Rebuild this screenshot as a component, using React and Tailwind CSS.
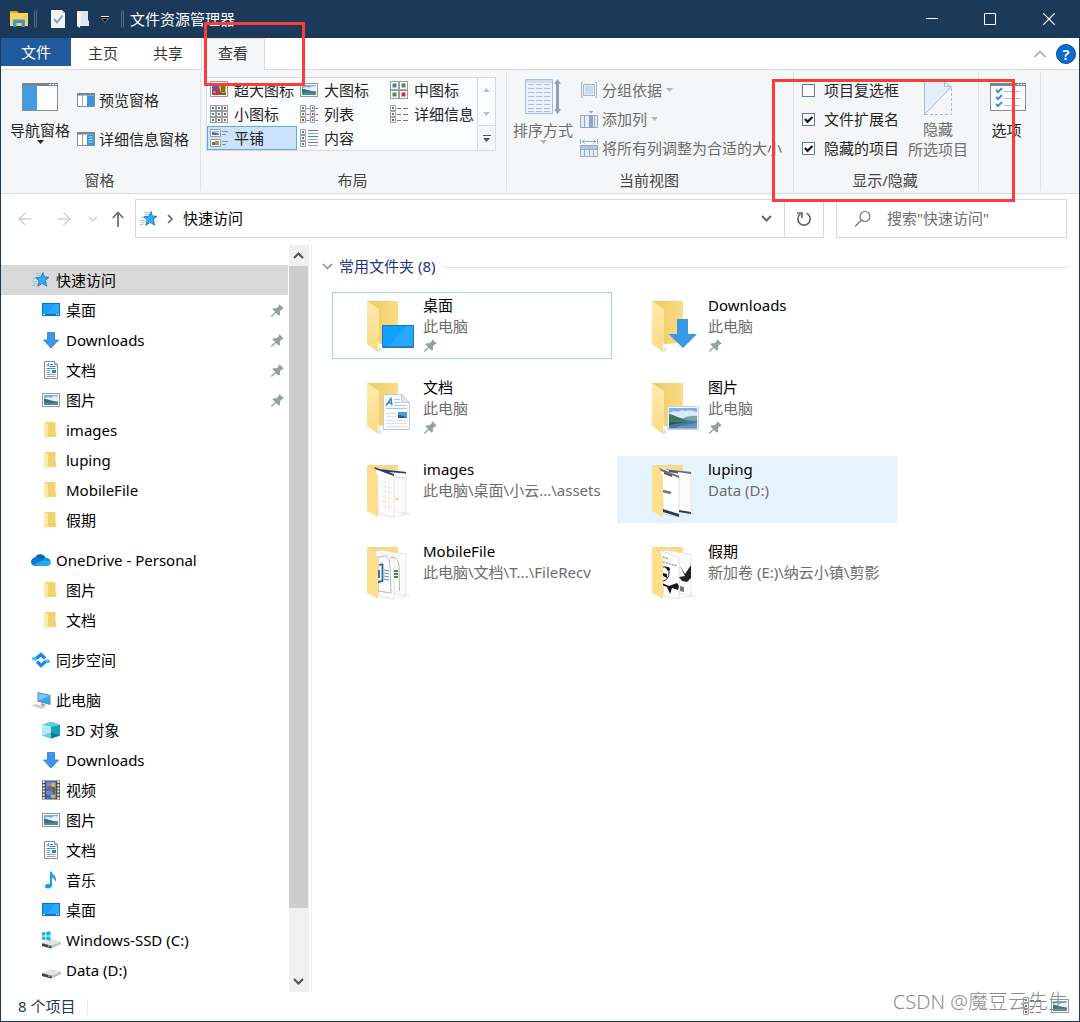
import { useState } from "react";
import { ArrowLeft, ArrowRight } from "lucide-react";

/* ---------- small icons ---------- */

const StarIcon = () => (
  <svg className="w-[18px] h-[18px] shrink-0" viewBox="0 0 18 18">
    <path d="M11 1.500l1.300 4.500 4.700.3-3.700 3.200 1.300 5.700-4.300-2.900-4.500 3 1.400-5.300-3.400-3.300 5-.4z" fill="#35aaf0" stroke="#1679c4" strokeWidth="0.9" strokeLinejoin="round" />
    <path d="M4 2.500h5M5 4.500h4M1 7.500h3M0 10.500h5M1 12.500h4M0 14.500h3" stroke="#7cc3f1" strokeWidth="0.8" />
  </svg>
);

const DesktopIcon = () => (
  <svg className="w-[18px] h-[18px] shrink-0" viewBox="0 0 18 18">
    <rect x="0.5" y="2.500" width="17" height="12" fill="#18a0fb" stroke="#0a74c4" />
    <path d="M13 3l-8 10h12V3z" fill="#3fb4ff" opacity="0.5" />
    <path d="M1 13.500h16" stroke="#0a6fbd" />
    <path d="M1 13.500h2M14 13.500h1M16 13.500h1" stroke="#e6f5ff" />
  </svg>
);

const DownloadIcon = () => (
  <svg className="w-[18px] h-[18px] shrink-0" viewBox="0 0 18 18">
    <path d="M5.500 1.500h7v7.500h4l-7.500 8-7.500-8h4z" fill="#3b97e8" stroke="#2a7fd0" strokeWidth="0.8" />
  </svg>
);

const DocIcon = () => (
  <svg className="w-[18px] h-[18px] shrink-0" viewBox="0 0 18 18">
    <path d="M2.500.5h10l3 3v14h-13z" fill="#fff" stroke="#8a8f94" />
    <path d="M12.500.5v3h3" fill="#e4e7e9" stroke="#8a8f94" />
    <path d="M4.500 5.500l2-3 .5 3M8 3.500h3M8 5.500h5.500M4.500 7.500h9" fill="none" stroke="#2e90d6" />
    <path d="M4.500 9.500h4M4.500 11.500h4M4.500 13.500h9M4.500 15.500h9" stroke="#9da3a8" />
    <path d="M10 9h4v3h-4z" fill="#347fb8" />
  </svg>
);

const PictureIcon = () => (
  <svg className="w-[18px] h-[18px] shrink-0" viewBox="0 0 18 18">
    <rect x="0.5" y="2.500" width="17" height="13" fill="#fff" stroke="#94989c" />
    <path d="M2 4h14v10H2z" fill="#74aef2" />
    <path d="M3 7q4-2 6 0 3-3 7-1.500V11H3z" fill="#e4f2fc" />
    <path d="M2 8c4-.3 6 2 14 2.500V12H2z" fill="#3f7161" />
    <path d="M2 11.500h14V14H2z" fill="#4a86ad" />
  </svg>
);

const FolderIcon = () => (
  <svg className="w-[18px] h-[18px] shrink-0" viewBox="0 0 18 18">
    <path d="M2.500 1h11v10l.8 1v4H4z" fill="#f7d675" />
    <path d="M5 1.500h8V15H6z" fill="#efcb64" opacity="0.5" />
    <path d="M2 1.300l4 2V13l-.8 4.800L2 15.500z" fill="#ffe9a8" />
  </svg>
);

const CloudIcon = () => (
  <svg className="w-5 h-[18px] shrink-0" viewBox="0 0 20 18">
    <path d="M4 7c1-3 4-4.500 7-3.500 2.300.7 3 2 3.500 3.500l-2 4-7-1z" fill="#0364b8" />
    <path d="M4.800 6.300c2-.5 3.200.3 8.200 3.400L4 15C1.500 15 0 13 0 10.800s2-4.400 4.800-4.500z" fill="#0f78d4" />
    <path d="M13 7c3-1 6 .5 6.600 3.200L17 12l-6-2z" fill="#1490df" />
    <path d="M2 14.200l9-4.700 8.500 1c1 2-.4 4.500-3 4.500H4.500c-1 0-1.800-.3-2.500-.8z" fill="#28a8ea" />
  </svg>
);

const SyncIcon = () => (
  <svg className="w-[18px] h-[18px] shrink-0" viewBox="0 0 18 18" fill="none" strokeWidth="3.200">
    <path d="M1 7.500c2.500 1 3.500 0 4.500-1L9 3.500l4 4" stroke="#1d83f5" />
    <path d="M17 10.500c-2.500-1-3.500 0-4.500 1l-3.500 3-4-4" stroke="#1d83f5" />
    <path d="M0 7c1.500 1 3 1 4.500.3M18 11c-1.500-1-3-1-4.500-.3" stroke="#35d6f5" strokeWidth="2.500" />
  </svg>
);

const ComputerIcon = () => (
  <svg className="w-5 h-[18px] shrink-0" viewBox="0 0 20 18">
    <path d="M6.500 1l13 3v10l-13-3.500z" fill="#6b7f8e" />
    <path d="M7.500 2.300l11.300 2.500v7.900l-11.300-3z" fill="#2fa9f0" />
    <path d="M7.500 2.300l11.300 2.500-11.300 4.700z" fill="#74c9f8" />
    <path d="M10 12l4 1v2.500l-4-1z" fill="#a5abb0" />
    <path d="M0 14.500l5-1.500 10 3-4 2z" fill="#c9ced2" />
  </svg>
);

const CubeIcon = () => (
  <svg className="w-[18px] h-[18px] shrink-0" viewBox="0 0 18 18">
    <path d="M9 .5l9 3-9 2.500-9-2.500z" fill="#5fced9" />
    <path d="M0 3.500L9 6v11.500l-9-3z" fill="#b3ecf0" />
    <path d="M18 3.500L9 6v11.500l9-3z" fill="#159fc0" />
    <path d="M9 11.500l9 3-9 3z" fill="#0b7890" />
    <path d="M9 11.500l-9 3 9 3z" fill="#62d0da" />
  </svg>
);

const VideoIcon = () => (
  <svg className="w-[18px] h-5 shrink-0" viewBox="0 0 18 20">
    <path d="M0 .5h18v19H0z" fill="#4a4a4a" />
    <path d="M1.700 1v18M16.300 1v18" stroke="#eee" strokeWidth="2" strokeDasharray="2 1.200" />
    <path d="M4 1.500h10v8H4zM4 10.500h10v8H4z" fill="#5a8ee0" />
    <path d="M9 3h4v5H9z" fill="#d8b32b" />
    <path d="M5 6h5v3H5z" fill="#b64a72" />
    <path d="M10 7h3v2h-3z" fill="#3b7c36" />
    <path d="M4 14l5 2 1 2.500H4z" fill="#3469c4" />
    <path d="M9 15h4v3H9z" fill="#d8b32b" />
    <path d="M10 11h3v3h-2z" fill="#c2382e" />
  </svg>
);

const MusicIcon = () => (
  <svg className="w-[18px] h-[18px] shrink-0" viewBox="0 0 18 18">
    <path d="M8 .5h1.500c.5 3 4.500 4 4.500 7.500 0 1-.3 2-1 3 0-3-1.500-4-3-4.500V14c0 2-1.500 3.500-4 3.500C4 17.500 3 16.700 3 15.500c0-2 2.500-3.300 5-2.500z" fill="#1c9bf0" />
  </svg>
);

const DriveIcon = ({ win }) => (
  <svg className="w-[19px] h-[18px] shrink-0" viewBox="0 0 19 18">
    <path d="M0 12.500L9 8.500l10 2.300v2.500L9 17.500l-9-2.500z" fill="#bfc3c6" />
    <path d="M0 12.300l9-3.800 10 2.300-9.500 4z" fill="#e1e3e5" />
    <path d="M0 12.300l9.500 2.500v2.700L0 15z" fill="#3d4144" />
    <path d="M6 15h2" stroke="#4ddd56" strokeWidth="1.500" />
    {win && <path d="M0 1.500l3.300-.5v3.500H0zM4.200.9L8.500.3v4.200H4.200zM0 5.400h3.300v3.500L0 8.400zM4.200 5.400h4.300v4.200l-4.300-.6z" fill="#11b3f2" />}
  </svg>
);

const PinIcon = () => (
  <svg className="w-[13px] h-[13px] shrink-0" viewBox="0 0 13 13">
    <path d="M8.500.3l4.200 4.200-1.200.8-.6-.1-2 2.300.2 3-1.200 1.200L4.800 8.900 1 12.700l-1-.2.2-1L4.100 8 1.300 5.200l1.200-1 3 .1L7.800 2.200l-.1-.7z" fill="#93a0a8" />
  </svg>
);

const Caret = ({ className }) => (
  <svg className={`w-[7px] h-1 shrink-0 ${className || ""}`} viewBox="0 0 7 4"><path d="M0 0h7L3.500 4z" fill="currentColor" /></svg>
);

const arrows = { down: "M1 1l4.500 4.500L10 1", up: "M1 6l4.500-4.500L10 6" };

const Arrow = ({ dir, width = 1.5 }) => (
  <svg className="w-[11px] h-[7px] shrink-0" viewBox="0 0 11 7"><path d={arrows[dir]} fill="none" stroke="currentColor" strokeWidth={width} /></svg>
);

/* ---------- ribbon icons ---------- */

const NavPaneIcon = () => (
  <svg className="w-9 h-7" viewBox="0 0 36 28">
    <path d="M.5.5h35v27H.5z" fill="#fdfdfd" stroke="#888d92" />
    <path d="M0 0h36v3H0z" fill="#7f8488" />
    <path d="M27 1.500h2M30 1.500h2M33 1.500h2" stroke="#fff" />
    <path d="M1 3h14v24H1z" fill="#429ce3" />
  </svg>
);

const SmallPaneIcon = ({ detail }) => (
  <svg className="w-[18px] h-3.5 shrink-0" viewBox="0 0 18 14">
    <path d="M.5.5h17v13H.5z" fill="#fdfdfd" stroke="#888d92" />
    <path d="M0 0h18v2.500H0z" fill="#7f8488" />
    <path d="M5.500 2v11" stroke="#a7abae" />
    <path d="M10 2.500h7V13h-7z" fill="#3796e3" />
    {detail && <path d="M11.500 5h4M11.500 7.500h4M11.500 10h4" stroke="#c5e2fa" />}
  </svg>
);

const ThumbIcon = ({ grid }) => {
  const step = 18 / grid;
  const size = grid === 2 ? 4 : 2;
  const pad = (step - size) / 2;
  const colors = ["#3c83b5", "#5a8a4a", "#c23b2e"];
  const cells = Array.from({ length: grid * grid }, (_, i) => ({ c: i % grid, r: Math.floor(i / grid) }));
  return (
    <svg className="w-[18px] h-[18px] shrink-0" viewBox="0 0 18 18">
      {cells.map(({ c, r }) => (
        <g key={`${c}-${r}`}>
          <rect x={c * step + 0.5} y={r * step + 0.5} width={step - 1} height={step - 1} fill="#fff" stroke="#9a9ea2" />
          <rect x={c * step + pad} y={r * step + pad} width={size} height={size} fill={colors[(c + (r === grid - 1 ? 1 : 0)) % 3]} />
        </g>
      ))}
    </svg>
  );
};

const HugeIcon = () => (
  <svg className="w-[18px] h-[18px] shrink-0" viewBox="0 0 18 18">
    <path d="M.5.5h17v15H.5z" fill="#fff" stroke="#94989c" />
    <path d="M2 2h14v12H2z" fill="#3e64c8" />
    <path d="M2 9l4-2 5 4v3H2z" fill="#cf2f3d" />
    <path d="M9 5l4-2 3 3v5l-3 2-3-3z" fill="#e8b81e" />
    <path d="M12 5v6M14 5v6" stroke="#2a2110" />
    <path d="M3 10h3v2H3z" fill="#4aa3e0" />
    <path d="M11 12h5v2h-5z" fill="#2f7d38" />
  </svg>
);

const ListIcon = ({ kind }) => (
  <svg className="w-[18px] h-[18px] shrink-0" viewBox="0 0 18 18" fill="none">
    {kind === "tiles" ? (
      <>
        <path d="M.5.5h10v7H.5zM.5 10.500h10v7H.5z" fill="#fff" stroke="#9a9ea2" />
        <path d="M2 3q4 0 7 2v1H2zM2 13h3v3H2z" fill="#3b7791" />
        <path d="M2 2h7v2z" fill="#7fb9f2" />
        <path d="M5 12h4v4H5z" fill="#c4943a" />
        <path d="M12 2.500h6M12 5.500h4M12 12.500h6M12 15.500h4" stroke="#8a8e92" />
      </>
    ) : (
      <>
        <path d="M.5.5h5v5h-5zM.5 6.500h5v5h-5zM.5 12.500h5v5h-5z" fill="#fff" stroke="#9a9ea2" />
        <path d="M2 3h2" stroke="#3c83b5" strokeWidth="2" />
        <path d="M2 9h2" stroke="#5a8a4a" strokeWidth="2" />
        <path d="M2 15h2" stroke={kind === "content" ? "#3c83b5" : "#c23b2e"} strokeWidth="2" />
        {kind === "list" && (
          <>
            <path d="M10.500.5h4v5h-4zM10.500 6.500h4v5h-4zM10.500 12.500h4v5h-4z" fill="#fff" stroke="#9a9ea2" />
            <path d="M12 3h1.500M12 15h1.500" stroke="#3c83b5" strokeWidth="2" />
            <path d="M12 9h1.500" stroke="#c23b2e" strokeWidth="2" />
            <path d="M6.500 3.500h3M6.500 9.500h3M6.500 15.500h3M15.500 3.500H18M15.500 9.500H18M15.500 15.500H18" stroke="#777" />
          </>
        )}
        {kind === "detail" && <path d="M7 3.500h4M13 3.500h5M7 9.500h4M13 9.500h5M7 15.500h4M13 15.500h5" stroke="#777" />}
        {kind === "content" && (
          <>
            <path d="M8 1.500h10M8 7.500h10M8 13.500h10" stroke="#777" />
            <path d="M8 4.500h10M8 10.500h10M8 16.500h10" stroke="#7aaef0" />
          </>
        )}
      </>
    )}
  </svg>
);

const SortIcon = () => (
  <svg className="w-9 h-9" viewBox="0 0 36 36">
    <path d="M.5.5h27v34H.5z" fill="#e9f1fb" stroke="#a9bbd8" />
    <path d="M1 1h26v3H1z" fill="#cfdcf0" />
    <path d="M3 5.500h22M3 9.500h22M3 13.500h22M3 17.500h22M3 21.500h22M3 25.500h22M3 29.500h22M3 32.500h22" stroke="#aebfd9" strokeDasharray="6 2" />
    <path d="M31 4h3v27h-3z" fill="#8ea1c2" />
    <path d="M32.500 0l3.500 5h-7zM32.500 35l3.500-5h-7z" fill="#8ea1c2" />
  </svg>
);

const GroupIcon = () => (
  <svg className="w-[18px] h-[18px] shrink-0" viewBox="0 0 18 18" fill="none">
    <path d="M3 1.500H1.500v15H3M15 1.500h1.500v15H15" stroke="#a3b4d0" />
    <path d="M3.500 3.500h11v11h-11z" fill="#e2ecf9" stroke="#a3b4d0" />
    <path d="M5 5h8v8H5z" fill="#c9d9ee" />
  </svg>
);

const AddColIcon = () => (
  <svg className="w-[18px] h-[18px] shrink-0" viewBox="0 0 18 18">
    <path d="M.5 5.500h17v12H.5z" fill="#e4eefb" stroke="#94a8ca" />
    <path d="M4.500 6v11M14.500 6v11" stroke="#94a8ca" />
    <path d="M9 5h4v13H9zM8.500 1h5L11 3.500z" fill="#8fa4c8" />
  </svg>
);

const FitIcon = () => (
  <svg className="w-[18px] h-[18px] shrink-0" viewBox="0 0 18 18" fill="none" stroke="#94a8ca">
    <path d="M.5 0v5M17.500 0v5M2 2.500h14M4.500.5l-2 2 2 2M13.500.5l2 2-2 2" />
    <path d="M.5 6.500h17v11H.5z" fill="#e4eefb" />
    <path d="M1 7h16v3H1z" fill="#b6c5de" stroke="none" />
    <path d="M0 10.500h18M4.500 11v6M9.500 11v6M13.500 11v6" />
  </svg>
);

const HideIcon = () => (
  <svg className="w-7 h-[34px]" viewBox="0 0 28 34" fill="none">
    <path d="M.5 33.500V.5h20l7 6z" fill="#e6f0fd" />
    <path d="M20.500 0v5.500h7L.5 33.500V0" stroke="#a8b9d6" />
    <path d="M27.500 7v26.500H1" stroke="#a8b9d6" strokeDasharray="3 2" />
    <path d="M20.500.5l7 6" stroke="#a8b9d6" />
  </svg>
);

const OptionsIcon = () => (
  <svg className="w-9 h-7" viewBox="0 0 36 28" fill="none">
    <path d="M.5.5h35v27H.5z" fill="#fdfdfd" stroke="#888d92" />
    <path d="M0 0h36v3H0z" fill="#7f8488" />
    <path d="M27 1.500h2M30 1.500h2M33 1.500h2" stroke="#fff" />
    <path d="M6 7l2 2 4-4M6 14l2 2 4-4M6 21l2 2 4-4" stroke="#3594dc" strokeWidth="2" />
    <path d="M14 8.500h16M14 15.500h16M14 22.500h16" stroke="#b9bcbf" />
  </svg>
);

/* ---------- tile icons ---------- */

const FolderOverlay = ({ kind }) => {
  if (kind === "desktop") return (
    <>
      <path d="M16.500 25.500h31v22h-31z" fill="#12a0ff" stroke="#1577c2" />
      <path d="M40 26h7v20H24z" fill="#39b1ff" opacity="0.5" />
      <path d="M16 46.500h32" stroke="#2a86b8" />
    </>
  );
  if (kind === "download") return <path d="M26 19h11v15h9L32 48 17.500 34H26z" fill="#3b97e8" />;
  if (kind === "doc") return (
    <>
      <path d="M17.500 12.500h18l8 8v27h-26z" fill="#fbfcfd" stroke="#c6cbcf" />
      <path d="M35.500 12.500v8h8z" fill="#e4e7e9" stroke="#c6cbcf" />
      <path d="M20 23.500l5-7 1 7M22 21h4" fill="none" stroke="#2e80b8" strokeWidth="1.300" />
      <path d="M28 17.500h6M28 20.500h6M28 23.500h13M20 26.500h21" stroke="#a5cdea" />
      <path d="M20 31.500h10M20 34.500h10M20 38.500h21M20 41.500h21M20 44.500h21" stroke="#dfe2e4" />
      <path d="M32 30h9v6h-9z" fill="#4a9bd8" />
      <path d="M32 33q5 0 9 3h-9z" fill="#2c5f6d" />
    </>
  );
  return (
    <>
      <path d="M16.500 24.500h31v23h-31z" fill="#f4f6f8" stroke="#cdd3d9" />
      <path d="M18 26h28v12H18z" fill="#7aaef7" />
      <path d="M18 31q5-3 9-1 3-3 7-1 5-2 12 1v10H18z" fill="#d9ebfa" />
      <path d="M30 37q8-4 16-3v5H30z" fill="#7da5a0" />
      <path d="M18 32c7 1 10 5 24 7.500l-24 1z" fill="#3f7558" />
      <path d="M18 39.500c10-1 19-1 28-.5v7.500H18z" fill="#3f7ba6" />
      <path d="M18 40h18l-18 3z" fill="#2b5560" />
      <path d="M28 44l18-3v5H24z" fill="#76a9c6" opacity="0.6" />
    </>
  );
};

const PageContent = ({ kind }) => {
  if (kind === "images") return (
    <>
      <path d="M8 3l20 7v2L9 5zM14 5l26 3v1.500L22 8z" fill="#2b3f5e" />
      <path d="M29 13l10 1.500" stroke="#c9dcf2" strokeWidth="1" />
      <path d="M15 17l11 2M15 22l11 2M15 27l11 2M15 32l11 2M15 37l11 2M15 42l11 2M19 14v33M23 15v33" stroke="#f0e9ea" />
      <path d="M29 35h4" stroke="#eedcae" strokeWidth="2" />
    </>
  );
  if (kind === "luping") return (
    <>
      <path d="M8 4l20 8v2L10 7zM13 5l27 3v2L20 7z" fill="#6b6e70" />
      <path d="M13 8l8 3v2l-8-3zM18 6l9 1.500v2L18 8z" fill="#55585b" />
      <path d="M12 27l8 2" stroke="#7a746e" strokeWidth="2.500" />
      <path d="M12 45l16 5v3l-16-5zM28 46l12 2v2l-12-2z" fill="#23415c" />
    </>
  );
  if (kind === "mobile") return (
    <>
      <path d="M12 11l7-1q5 2 5 9l1 28-13-2z" fill="#fcfcfc" stroke="#a9a89c" strokeWidth="0.800" />
      <path d="M24 12q7-3 9 7l.5 26" fill="none" stroke="#a9a89c" strokeWidth="0.800" />
      <path d="M13 19l4-1M16.500 18v17M12 36l5-1M13 24v8" stroke="#2b62ad" strokeWidth="1.800" />
      <path d="M18 24l5 1M18 27l5 1M18 30l5 1M18 33l5 1" stroke="#5b8ccb" />
      <path d="M28 25h4M28 28h4M28 31h4" stroke="#2f8d52" strokeWidth="2" />
    </>
  );
  return (
    <>
      <path d="M12 11l6 2M12 16l14 4" stroke="#9a9a9a" strokeWidth="1.500" strokeDasharray="2 1" />
      <path d="M12 21q5-1 6 4t-3 9l-3 1" fill="none" stroke="#222" strokeWidth="1" />
      <path d="M14 21q5-1 5 3l-2 1zM12 27l4 1v4l-4-2zM11 37l7 3 8-3 2 3-1 4-6-2-2 6-3-7-5-2z" fill="#161616" />
      <path d="M29 20l5 8 6-9v13l-4 4-5-1-3-4 6-1z" fill="#222" />
      <path d="M29 40l4 1v5l-4-1z" fill="#777" />
    </>
  );
};

const TileIcon = ({ kind, open }) => (
  <svg className="w-[50px] h-[54px] shrink-0" viewBox="0 0 50 54">
    <defs>
      <linearGradient id="folderBack" x1="0" x2="1" y1="0" y2="0">
        <stop offset="0" stopColor="#ecc863" /><stop offset="1" stopColor="#fbdd85" />
      </linearGradient>
      <linearGradient id="folderFlap" x1="0" x2="0" y1="0" y2="1">
        <stop offset="0" stopColor="#ffebae" /><stop offset="1" stopColor="#fbdb83" />
      </linearGradient>
    </defs>
    {open ? (
      <>
        <path d="M1 1h31v8L13 12z" fill="#f9d983" />
        <path d="M28 53l18-3-6-2z" fill="#d9d9d9" opacity="0.5" />
        <path d="M12 4l28 4v41l-27-3z" fill="#fbfbfb" stroke="#dcdcdc" strokeWidth="0.600" />
        <path d="M9 4l19 8v41l-15-3z" fill="#fff" stroke="#cfcfcf" strokeWidth="0.600" />
        <PageContent kind={kind} />
        <path d="M1 1l11 10v42L1 47z" fill="#ffdf8c" />
      </>
    ) : (
      <>
        <path d="M1 1h31v42l-19 1L1 1z" fill="url(#folderBack)" />
        <path d="M1 1l12 8v29l-1 5v9L1 44z" fill="url(#folderFlap)" />
        <path d="M12 52l4-1-3-6z" fill="#e2e2e2" />
        <FolderOverlay kind={kind} />
      </>
    )}
  </svg>
);

/* ---------- data ---------- */

const tree = [
  { label: "快速访问", icon: StarIcon, active: true, items: [
    { label: "桌面", icon: DesktopIcon, pinned: true },
    { label: "Downloads", icon: DownloadIcon, pinned: true },
    { label: "文档", icon: DocIcon, pinned: true },
    { label: "图片", icon: PictureIcon, pinned: true },
    { label: "images", icon: FolderIcon },
    { label: "luping", icon: FolderIcon },
    { label: "MobileFile", icon: FolderIcon },
    { label: "假期", icon: FolderIcon },
  ] },
  { label: "OneDrive - Personal", icon: CloudIcon, items: [
    { label: "图片", icon: FolderIcon },
    { label: "文档", icon: FolderIcon },
  ] },
  { label: "同步空间", icon: SyncIcon, items: [] },
  { label: "此电脑", icon: ComputerIcon, items: [
    { label: "3D 对象", icon: CubeIcon },
    { label: "Downloads", icon: DownloadIcon },
    { label: "视频", icon: VideoIcon },
    { label: "图片", icon: PictureIcon },
    { label: "文档", icon: DocIcon },
    { label: "音乐", icon: MusicIcon },
    { label: "桌面", icon: DesktopIcon },
    { label: "Windows-SSD (C:)", icon: () => <DriveIcon win /> },
    { label: "Data (D:)", icon: DriveIcon },
  ] },
];

const tiles = [
  { name: "桌面", path: "此电脑", kind: "desktop", pinned: true },
  { name: "Downloads", path: "此电脑", kind: "download", pinned: true },
  { name: "文档", path: "此电脑", kind: "doc", pinned: true },
  { name: "图片", path: "此电脑", kind: "picture", pinned: true },
  { name: "images", path: "此电脑\\桌面\\小云...\\assets", kind: "images", open: true },
  { name: "luping", path: "Data (D:)", kind: "luping", open: true },
  { name: "MobileFile", path: "此电脑\\文档\\T...\\FileRecv", kind: "mobile", open: true },
  { name: "假期", path: "新加卷 (E:)\\纳云小镇\\剪影", kind: "holiday", open: true },
];

const layouts = [
  { label: "超大图标", icon: <HugeIcon /> },
  { label: "大图标", icon: <PictureIcon /> },
  { label: "中图标", icon: <ThumbIcon grid={2} /> },
  { label: "小图标", icon: <ThumbIcon grid={3} /> },
  { label: "列表", icon: <ListIcon kind="list" /> },
  { label: "详细信息", icon: <ListIcon kind="detail" /> },
  { label: "平铺", icon: <ListIcon kind="tiles" /> },
  { label: "内容", icon: <ListIcon kind="content" /> },
];

/* ---------- sections ---------- */

function TitleBar() {
  return (
    <header className="flex items-center h-[38px] bg-[#1b3a5a] text-white">
      <div className="flex items-center pl-[9px]">
        <svg className="w-[18px] h-4" viewBox="0 0 18 16">
          <path d="M0 0h7l1.500 2H18v13H0z" fill="#fcd35c" />
          <path d="M0 0h7l1.500 2H0z" fill="#e6a20f" />
          <path d="M3 16V8.500h12V16h-3.500v-4h-5v4z" fill="#3c98dc" />
        </svg>
        <span className="ml-1.5 w-[3px] h-[18px] rounded-sm border border-[#566f88]" />
        <button aria-label="属性" className="ml-3.5">
          <svg className="w-3.5 h-[18px]" viewBox="0 0 14 18">
            <path d="M0 0h11l3 3v15H0z" fill="#f1f4f9" />
            <path d="M11 0v3h3z" fill="#b8c4d4" />
            <path d="M3 9l3 3.500 5.500-7" fill="none" stroke="#8c9fbd" strokeWidth="2" />
          </svg>
        </button>
        <button aria-label="新建文件夹" className="ml-3">
          <svg className="w-3 h-[18px]" viewBox="0 0 12 18">
            <path d="M1 1h10v9l1 1v5H1z" fill="#dfe6f0" />
            <path d="M0 1l3.500 2v11l-.7 4L0 16z" fill="#f5f8fc" />
          </svg>
        </button>
        <button aria-label="自定义快速访问工具栏" className="ml-3">
          <svg className="w-2 h-2" viewBox="0 0 8 8"><path d="M.5 3.500h7L4 7.500z" fill="#000" stroke="#c5cfd9" strokeWidth="0.500" /><path d="M0 1.500h8" stroke="#e5eaef" /><path d="M0 2.500h8" stroke="#000" /></svg>
        </button>
        <span className="ml-3 w-[3px] h-[18px] rounded-sm border border-[#566f88]" />
        <h1 className="ml-1.5 leading-5">文件资源管理器</h1>
      </div>
      <div className="flex ml-auto">
        <button aria-label="最小化" className="flex justify-center items-center w-[58px] h-[38px]">
          <svg className="w-3 h-3" viewBox="0 0 12 12"><path d="M0 5.500h12" stroke="#fff" /></svg>
        </button>
        <button aria-label="最大化" className="flex justify-center items-center w-[58px] h-[38px]">
          <svg className="w-3 h-3" viewBox="0 0 12 12"><path d="M.5.5h11v11H.5z" fill="none" stroke="#fff" /></svg>
        </button>
        <button aria-label="关闭" className="flex justify-center items-center w-[60px] h-[38px]">
          <svg className="w-3 h-3" viewBox="0 0 12 12"><path d="M.3.3l11.400 11.400M11.700.3L.3 11.700" stroke="#fff" strokeWidth="1.200" /></svg>
        </button>
      </div>
    </header>
  );
}

function TabRow() {
  return (
    <nav className="flex items-stretch h-8 border-b border-[#dadbdc]">
      <button className="w-[70px] h-7 bg-[#1e5a9c] text-white">文件</button>
      <button className="w-16">主页</button>
      <button className="w-[66px]">共享</button>
      <div className="relative">
        <button className="w-16 h-8 pb-0.5 border-x border-t border-[#dadbdc] bg-[#f5f6f7]">查看</button>
        <div className="absolute -top-4 left-[3px] z-10 w-[101px] h-16 border-3 border-[#fc3b3b] pointer-events-none" />
      </div>
      <div className="flex items-center gap-2.5 ml-auto pr-[3px]">
        <button aria-label="折叠功能区"><svg className="w-3 h-2" viewBox="0 0 12 8"><path d="M.5 7L6 1.500 11.500 7" fill="none" stroke="#a0a0a0" strokeWidth="1.500" /></svg></button>
        <button aria-label="帮助" className="w-5 h-5 rounded-full border border-[#0b4f95] bg-[#0a6ccc] text-white font-semibold leading-4">?</button>
      </div>
    </nav>
  );
}

function Group({ label, className, children }) {
  return (
    <section className={`flex flex-col shrink-0 border-r border-[#e0e1e3] ${className}`}>
      <div className="flex-1">{children}</div>
      <h2 className="h-[21px] pr-0.5 text-center text-[#444] leading-5">{label}</h2>
    </section>
  );
}

function Ribbon() {
  const [view, setView] = useState("平铺");
  const [show, setShow] = useState({ "项目复选框": false, "文件扩展名": true, "隐藏的项目": true });

  return (
    <div className="flex h-[124px] py-0.5 border-b border-[#dadbdc] bg-[#f5f6f7] text-[#262626]">
      <Group label="窗格" className="w-[200px]">
        <div className="flex pt-[11px] pl-2">
          <button className="flex flex-col items-center w-[62px]">
            <NavPaneIcon />
            <span className="mt-[9px] leading-5">导航窗格</span>
            <Caret />
          </button>
          <div className="flex flex-col pt-[7px] pl-1.5 gap-[19px]">
            <button className="flex items-center gap-1 h-5"><SmallPaneIcon />预览窗格</button>
            <button className="flex items-center gap-1 h-5"><SmallPaneIcon detail />详细信息窗格</button>
          </div>
        </div>
      </Group>

      <Group label="布局" className="w-[306px]">
        <div className="flex mt-[5px] ml-[5px] w-[290px] border border-[#dadbdc] bg-[#fbfcfe]">
          <div className="grid grid-cols-3 w-[270px]">
            {layouts.map((l) => (
              <button key={l.label} onClick={() => setView(l.label)}
                className={`flex items-center gap-1.5 h-6 px-0.5 border whitespace-nowrap ${view === l.label ? "border-[#66a7e8] bg-[#cce4fb]" : "border-transparent"}`}>
                {l.icon}{l.label}
              </button>
            ))}
          </div>
          <div className="flex flex-col flex-1 border-l border-[#dadbdc]">
            <button aria-label="向上" className="flex flex-1 justify-center items-center text-[#b8bfcb]"><Caret className="rotate-180" /></button>
            <button aria-label="向下" className="flex flex-1 justify-center items-center text-[#b8bfcb]"><Caret /></button>
            <button aria-label="更多" className="flex flex-col flex-1 gap-0.5 justify-center items-center border-t border-[#dadbdc] bg-[#f5f6f7] text-[#3f5573]">
              <span className="w-2 h-px bg-[#3f5573]" /><Caret />
            </button>
          </div>
        </div>
      </Group>

      <Group label="当前视图" className="w-[287px]">
        <div className="flex pt-[7px] pl-[5px] text-[#6d6d6d]">
          <button className="flex flex-col items-center w-[62px]">
            <SortIcon />
            <span className="mt-[5px] leading-5">排序方式</span>
            <Caret className="text-[#b5b5b5]" />
          </button>
          <div className="flex flex-col pt-px pl-1.5 gap-[9px] whitespace-nowrap">
            <button className="flex items-center gap-1 h-5"><GroupIcon />分组依据<Caret className="text-[#b5b5b5]" /></button>
            <button className="flex items-center gap-1 h-5"><AddColIcon />添加列<Caret className="text-[#b5b5b5]" /></button>
            <button className="flex items-center gap-1 h-5"><FitIcon />将所有列调整为合适的大小</button>
          </div>
        </div>
      </Group>

      <div className="relative flex shrink-0">
        <Group label="显示/隐藏" className="w-[185px]">
          <div className="flex pt-2 pl-2">
            <div className="flex flex-col gap-[9px]">
              {Object.keys(show).map((name) => (
                <label key={name} className="flex items-center gap-[9px] h-5 whitespace-nowrap">
                  <span className="relative flex w-[13px] h-[13px]">
                    <input type="checkbox" checked={show[name]} onChange={(e) => setShow({ ...show, [name]: e.target.checked })}
                      className="appearance-none w-[13px] h-[13px] border border-[#5f7ba6] bg-white" />
                    {show[name] && <svg className="absolute inset-0 pointer-events-none" viewBox="0 0 13 13"><path d="M3 6l2.500 2.800L10.500 4" fill="none" stroke="#111" strokeWidth="2.200" /></svg>}
                  </span>
                  {name}
                </label>
              ))}
            </div>
            <button className="flex flex-col items-center pt-px pl-[9px] text-[#6d6d6d] leading-5">
              <HideIcon />
              <span className="mt-1">隐藏</span>
              <span>所选项目</span>
            </button>
          </div>
        </Group>
        <div className="absolute top-[7px] -left-[22px] z-10 w-[243px] h-[123px] border-3 border-[#fc3b3b] pointer-events-none" />
      </div>

      <Group label="" className="w-[62px]">
        <button className="flex flex-col items-center w-full pt-[11px] pr-1">
          <OptionsIcon />
          <span className="mt-[9px] pr-0.5 leading-5">选项</span>
        </button>
      </Group>
    </div>
  );
}

function AddressRow() {
  return (
    <div className="flex items-center h-[51px] pb-0.5 pr-3">
      <div className="flex items-center w-[134px] pl-3.5 text-[#d0d0d0]">
        <button aria-label="后退"><ArrowLeft size={20} strokeWidth={1.7} /></button>
        <button aria-label="前进" className="ml-[19px]"><ArrowRight size={20} strokeWidth={1.7} /></button>
        <button aria-label="最近浏览的位置" className="flex ml-3.5">
          <svg className="w-2.5 h-1.5" viewBox="0 0 10 6"><path d="M1 1l4 4 4-4" fill="none" stroke="currentColor" strokeWidth="1.500" /></svg>
        </button>
        <button aria-label="上移" className="flex ml-3.5 text-[#707070]">
          <svg className="w-3 h-4" viewBox="0 0 12 16"><path d="M6 16V1.500M.7 7L6 1.500 11.300 7" fill="none" stroke="currentColor" strokeWidth="1.800" /></svg>
        </button>
      </div>
      <div className="flex flex-1 items-center h-[39px] border border-[#d9d9d9]">
        <div className="flex flex-1 items-center pl-1">
          <StarIcon />
          <svg className="ml-[9px] w-1.5 h-2.5" viewBox="0 0 6 10"><path d="M1 1l4 4-4 4" fill="none" stroke="#666" strokeWidth="1.600" /></svg>
          <button className="ml-2.5 text-black">快速访问</button>
        </div>
        <button aria-label="上一个位置" className="px-3 text-[#666]"><Arrow dir="down" width={2} /></button>
        <button aria-label="刷新" className="flex justify-center items-center w-[39px] h-full border-l border-[#d9d9d9] text-[#6a6a6a]">
          <svg className="w-4 h-4" viewBox="0 0 16 16" fill="none" stroke="currentColor" strokeWidth="1.700"><path d="M10.500 2.300a6.200 6.200 0 1 1-6 .6M1 2h5v5" /></svg>
        </button>
      </div>
      <label className="flex items-center ml-3 w-[231px] h-[39px] pl-[17px] border border-[#d9d9d9]">
        <svg className="w-[18px] h-[18px] shrink-0" viewBox="0 0 18 18" fill="none" stroke="#777" strokeWidth="1.200"><circle cx="11" cy="6.500" r="5" /><path d="M7.500 10L1 16.500" /></svg>
        <input type="text" aria-label="搜索" placeholder={'搜索"快速访问"'} className="ml-[15px] w-0 flex-1 outline-none placeholder:text-[#6d6d6d]" />
      </label>
    </div>
  );
}

function Row({ item, root }) {
  const Icon = item.icon;
  return (
    <a href="#" className={`flex items-center gap-[5px] h-[30px] pr-1 ${root ? "pl-[30px]" : "pl-10"} ${item.active ? "bg-[#d9d9d9]" : ""}`}>
      <span className="flex justify-center w-5"><Icon /></span>
      <span>{item.label}</span>
      {item.pinned && <span className="ml-auto"><PinIcon /></span>}
    </a>
  );
}

function Sidebar() {
  return (
    <aside className="flex shrink-0 w-[311px] border-r border-[#f0f0f0] text-black">
      <div className="flex flex-col flex-1 gap-2.5 pt-5">
        {tree.map((node) => (
          <div key={node.label}>
            <Row item={node} root />
            {node.items.map((item) => <Row key={item.label} item={item} />)}
          </div>
        ))}
      </div>
      <div className="flex flex-col w-5 mr-0.5 ml-px bg-[#f0f0f0] text-[#555]">
        <button aria-label="向上滚动" className="flex justify-center items-center h-[21px] pr-px"><Arrow dir="up" width={2.2} /></button>
        <div className="flex-1"><div className="h-[91%] mr-px bg-[#cdcdcd]" /></div>
        <button aria-label="向下滚动" className="flex justify-center items-center h-[21px] pr-px"><Arrow dir="down" width={2.2} /></button>
      </div>
    </aside>
  );
}

function FileArea() {
  return (
    <main className="flex-1 pt-2.5 pr-2.5">
      <div className="flex items-center gap-2 h-6 pl-2.5">
        <h2 className="flex items-center gap-1.5 pb-px text-[#1e3287]"><span className="text-[#777]"><Arrow dir="down" width={1.2} /></span>常用文件夹 (8)</h2>
        <span className="flex-1 h-px bg-[#e2e2e2]" />
      </div>
      <div className="flex flex-wrap gap-x-[5px] gap-y-[15px] pt-[13px] pl-5">
        {tiles.map((t) => (
          <a href="#" key={t.name}
            className={`flex w-[280px] h-[67px] pt-[7px] pl-[33px] border ${t.kind === "desktop" ? "border-[#99d1ff]" : t.kind === "luping" ? "border-[#e5f3ff] bg-[#e5f3ff]" : "border-transparent"}`}>
            <TileIcon kind={t.kind} open={t.open} />
            <div className="-mt-[5px] pl-[7px] leading-[21px] whitespace-nowrap">
              <p className="text-black">{t.name}</p>
              <p className="text-[#6d6d6d]">{t.path}</p>
              {t.pinned && <div className="pt-0.5 pl-px"><PinIcon /></div>}
            </div>
          </a>
        ))}
      </div>
    </main>
  );
}

function StatusBar() {
  return (
    <footer className="relative flex items-center h-[29px] pl-[17px] pr-2.5 text-[#1e395b]">
      <span>8 个项目</span>
      <span className="ml-3 w-px h-4 bg-[#ececec]" />
      <div className="flex gap-2.5 pb-0.5 ml-auto">
        <button aria-label="详细信息视图"><ListIcon kind="detail" /></button>
        <button aria-label="大缩略图视图"><PictureIcon /></button>
      </div>
      <span className="absolute right-[11px] -top-0.5 text-xl leading-6 font-light text-[#8c8c8c] whitespace-nowrap">CSDN @魔豆云先生</span>
    </footer>
  );
}

export default function App() {
  return (
    <div className="flex flex-col min-h-screen border-x border-b border-[#1b3a5a] bg-white text-[15px] text-[#333] font-['Noto_Sans','Noto_Sans_CJK_SC',sans-serif]">
      <TitleBar />
      <TabRow />
      <Ribbon />
      <AddressRow />
      <div className="flex flex-1">
        <Sidebar />
        <FileArea />
      </div>
      <StatusBar />
    </div>
  );
}
